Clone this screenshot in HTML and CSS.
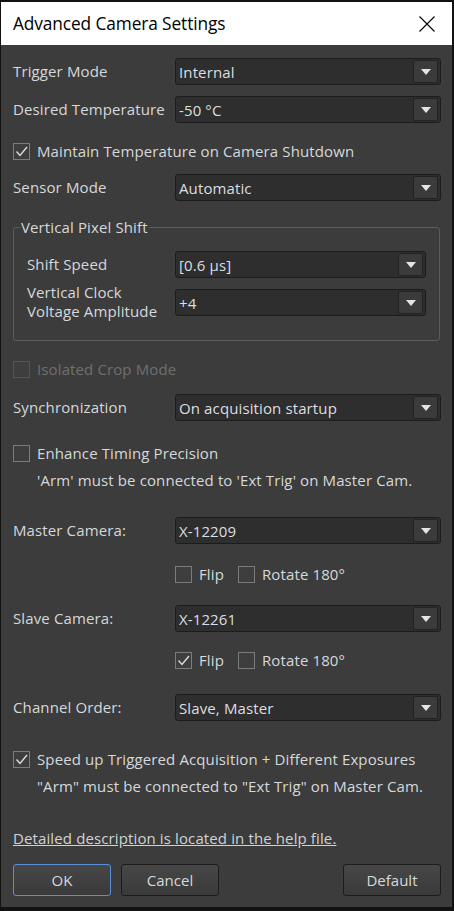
FILE: index.html
```html
<!DOCTYPE html>
<html>
<head>
<meta charset="utf-8">
<link rel="stylesheet" href="styles.css">
</head>
<body>
<div class="window">
  <div class="titlebar">
    <span class="title">Advanced Camera Settings</span>
    <svg class="close" width="16" height="16" viewBox="0 0 16 16"><path d="M0.5 0.5L15.5 15.5M15.5 0.5L0.5 15.5" stroke="#000" stroke-width="1.1" fill="none"/></svg>
  </div>
  <div class="content">
    <div class="row combo-row mt13">
      <span class="label">Trigger Mode</span>
      <div class="combo"><span class="combo-text">Internal</span><span class="combo-btn"><i class="tri"></i></span></div>
    </div>
    <div class="row combo-row mt11">
      <span class="label">Desired Temperature</span>
      <div class="combo"><span class="combo-text">-50 °C</span><span class="combo-btn"><i class="tri"></i></span></div>
    </div>
    <div class="row check-row mt18">
      <span class="box checked"><svg viewBox="0 0 17 17" width="17" height="17"><path d="M3.5 8.5L7 12.5L14 4" stroke="#dcdcdc" stroke-width="1.4" fill="none"/></svg></span>
      <span class="check-label">Maintain Temperature on Camera Shutdown</span>
    </div>
    <div class="row combo-row mt13">
      <span class="label">Sensor Mode</span>
      <div class="combo"><span class="combo-text">Automatic</span><span class="combo-btn"><i class="tri"></i></span></div>
    </div>
    <div class="group mt26">
      <span class="group-title">Vertical Pixel Shift</span>
      <div class="row combo-row">
        <span class="label inner">Shift Speed</span>
        <div class="combo"><span class="combo-text">[0.6 µs]</span><span class="combo-btn"><i class="tri"></i></span></div>
      </div>
      <div class="row combo-row mt11">
        <span class="label inner two">Vertical Clock<br>Voltage Amplitude</span>
        <div class="combo"><span class="combo-text">+4</span><span class="combo-btn"><i class="tri"></i></span></div>
      </div>
    </div>
    <div class="row check-row mt18 disabled">
      <span class="box"></span>
      <span class="check-label">Isolated Crop Mode</span>
    </div>
    <div class="row combo-row mt15">
      <span class="label">Synchronization</span>
      <div class="combo"><span class="combo-text">On acquisition startup</span><span class="combo-btn"><i class="tri"></i></span></div>
    </div>
    <div class="row check-row mt22">
      <span class="box"></span>
      <span class="check-label">Enhance Timing Precision</span>
    </div>
    <div class="note mt7">'Arm' must be connected to 'Ext Trig' on Master Cam.</div>
    <div class="row combo-row mt27">
      <span class="label">Master Camera:</span>
      <div class="combo"><span class="combo-text">X-12209</span><span class="combo-btn"><i class="tri"></i></span></div>
    </div>
    <div class="row check-row sub mt20">
      <span class="box"></span>
      <span class="check-label">Flip</span>
      <span class="box second"></span>
      <span class="check-label">Rotate 180°</span>
    </div>
    <div class="row combo-row mt21">
      <span class="label">Slave Camera:</span>
      <div class="combo"><span class="combo-text">X-12261</span><span class="combo-btn"><i class="tri"></i></span></div>
    </div>
    <div class="row check-row sub mt18">
      <span class="box checked"><svg viewBox="0 0 17 17" width="17" height="17"><path d="M3.5 8.5L7 12.5L14 4" stroke="#dcdcdc" stroke-width="1.4" fill="none"/></svg></span>
      <span class="check-label">Flip</span>
      <span class="box second"></span>
      <span class="check-label">Rotate 180°</span>
    </div>
    <div class="row combo-row mt24">
      <span class="label">Channel Order:</span>
      <div class="combo"><span class="combo-text">Slave, Master</span><span class="combo-btn"><i class="tri"></i></span></div>
    </div>
    <div class="row check-row mt28">
      <span class="box checked"><svg viewBox="0 0 17 17" width="17" height="17"><path d="M3.5 8.5L7 12.5L14 4" stroke="#dcdcdc" stroke-width="1.4" fill="none"/></svg></span>
      <span class="check-label">Speed up Triggered Acquisition + Different Exposures</span>
    </div>
    <div class="note mt7">"Arm" must be connected to "Ext Trig" on Master Cam.</div>
    <div class="link mt32">Detailed description is located in the help file.</div>
    <div class="buttons mt16">
      <button class="btn default-btn">OK</button>
      <button class="btn">Cancel</button>
      <span class="spacer"></span>
      <button class="btn">Default</button>
    </div>
  </div>
</div>
</body>
</html>
```
FILE: styles.css
```css
html, body {
  margin: 0;
  padding: 0;
}
body {
  background: #121212;
  width: 454px;
  height: 911px;
  overflow: hidden;
  font-family: "Open Sans", "Noto Sans", sans-serif;
}
.window {
  margin: 2px 0 0 1px;
  width: 451px;
  height: 905px;
  background: #3c3c3c;
  box-sizing: border-box;
  display: flex;
  flex-direction: column;
}
.titlebar {
  height: 43px;
  background: #ffffff;
  display: flex;
  align-items: center;
  padding: 0 17px 0 12px;
  flex: none;
}
.title {
  font-family: "Open Sans", "Noto Sans", sans-serif;
  font-size: 17.3px;
  color: #000;
  flex: 1;
  letter-spacing: -0.1px;
}
.close {
  display: block;
}
.content {
  padding: 0 11px 0 12px;
  display: flex;
  flex-direction: column;
  color: #d6d8da;
  font-size: 15px;
  letter-spacing: 0.12px;
}
.row {
  display: flex;
  align-items: center;
}
.combo-row {
  height: 27px;
}
.check-row {
  height: 20px;
}
.label {
  width: 162px;
  flex: none;
  line-height: 19px;
  white-space: nowrap;
}
.label.inner {
  width: 148px;
}
.label.two {
  line-height: 19px;
  margin-top: -2px;
}
.combo {
  flex: 1;
  height: 27px;
  box-sizing: border-box;
  border: 1px solid #1c1c1c;
  border-radius: 3px;
  background: #2e2e2e;
  display: flex;
  align-items: center;
  padding: 1px 2px 1px 3px;
}
.combo-text {
  flex: 1;
  color: #dcdee0;
}
.combo-btn {
  width: 25px;
  height: 23px;
  box-sizing: border-box;
  border: 1px solid #222;
  border-radius: 2px;
  background: #3b3b3b;
  display: flex;
  align-items: center;
  justify-content: center;
}
.tri {
  width: 0;
  height: 0;
  border-left: 5px solid transparent;
  border-right: 5px solid transparent;
  border-top: 6px solid #e4e4e4;
  margin-top: 1px;
}
.box {
  width: 17px;
  height: 17px;
  box-sizing: border-box;
  border: 1px solid #7c7c7c;
  background: #3e3e3e;
  flex: none;
  position: relative;
}
.box svg {
  position: absolute;
  left: -1px;
  top: -1px;
}
.check-label {
  margin-left: 7px;
  white-space: nowrap;
}
.sub {
  padding-left: 162px;
}
.box.second {
  margin-left: 14px;
}
.disabled .box {
  border-color: #555;
}
.disabled .check-label {
  color: #6f6f6f;
}
.note {
  padding-left: 24px;
  line-height: 20px;
  height: 20px;
  white-space: nowrap;
}
.group {
  position: relative;
  border: 1px solid #5c5c5c;
  border-radius: 3px;
  margin-right: 1px;
  padding: 23px 13px 24px 13px;
}
.group-title {
  position: absolute;
  left: 6px;
  top: -10px;
  background: #3c3c3c;
  padding: 0 1px;
  line-height: 18px;
}
.link {
  text-decoration: underline;
  line-height: 20px;
  height: 20px;
  color: #d0d2d4;
}
.buttons {
  display: flex;
  gap: 10px;
  height: 32px;
}
.spacer {
  flex: 1;
}
.btn {
  width: 98px;
  height: 32px;
  box-sizing: border-box;
  border: 1px solid #1c1c1c;
  border-radius: 3px;
  background: linear-gradient(#474747, #3a3a3a);
  color: #d6d8da;
  font-family: "Open Sans", "Noto Sans", sans-serif;
  font-size: 15px;
  padding: 0;
}
.default-btn {
  border-color: #5a8fd8;
}
.mt7 { margin-top: 7px; }
.mt11 { margin-top: 11px; }
.mt13 { margin-top: 13px; }
.mt15 { margin-top: 15px; }
.mt16 { margin-top: 16px; }
.mt18 { margin-top: 18px; }
.mt20 { margin-top: 20px; }
.mt21 { margin-top: 21px; }
.mt22 { margin-top: 22px; }
.mt24 { margin-top: 24px; }
.mt26 { margin-top: 26px; }
.mt27 { margin-top: 27px; }
.mt28 { margin-top: 28px; }
.mt32 { margin-top: 32px; }
```
